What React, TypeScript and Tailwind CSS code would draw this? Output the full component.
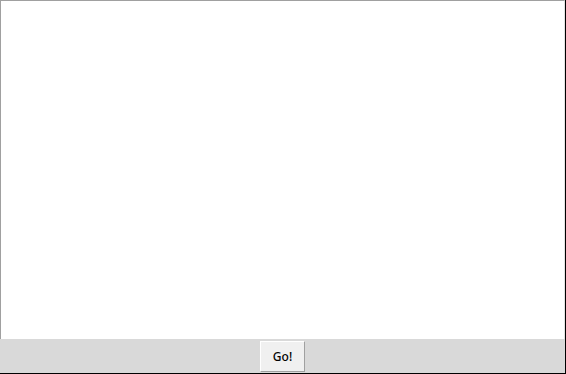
const App = () => {
  return (
    <div className="flex h-[374px] w-[566px] flex-col border-r border-b border-black bg-[#d9d9d9] font-['Noto_Sans',sans-serif]">
      <div className="flex-1 border-t border-l border-[#a0a0a0] border-r-[#e3e3e3] border-r bg-white" />
      <div className="flex h-[34px] items-start justify-center pt-[2px]">
        <button className="h-[31px] w-[45px] border border-t-white border-l-white border-r-[#a0a0a0] border-b-[#a0a0a0] bg-[#f0f0f0] text-[12px] font-medium text-black">
          Go!
        </button>
      </div>
    </div>
  )
}

export default App
